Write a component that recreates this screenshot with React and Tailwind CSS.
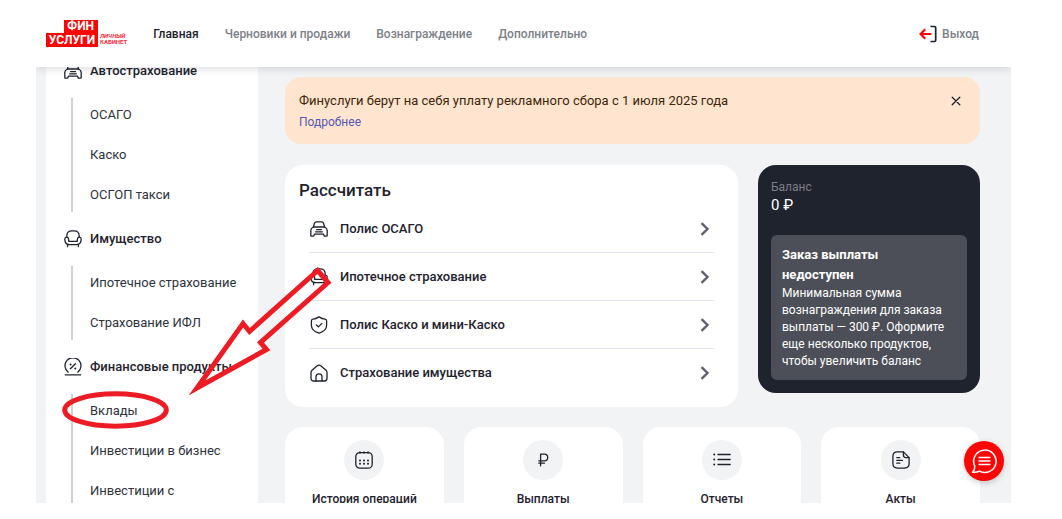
import React from "react";

const stroke = {
  fill: "none",
  stroke: "currentColor",
  strokeWidth: 1.3,
  strokeLinecap: "round",
  strokeLinejoin: "round",
};

function Icon({ children, className = "size-[18px]" }) {
  return (
    <svg viewBox="0 0 18 18" className={`${className} shrink-0`} aria-hidden="true" {...stroke}>
      {children}
    </svg>
  );
}

function CarIcon() {
  return (
    <Icon>
      <path d="M3.400 7 4.500 3.200Q4.900 1.800 6.300 1.800h5.400q1.400 0 1.800 1.400L14.600 7" />
      <path d="M3.400 7h11.200q2.600 1.200 2.600 3.600v4.800q0 .8-.8.8h-1.500q-.7 0-.9-.7l-.4-1.300H4.400L4 15.500q-.2.700-.9.700H1.600q-.8 0-.8-.8v-4.800Q.8 8.200 3.400 7Z" />
      <path d="M6.600 9.600h4.800M5.600 11.800h6.800" />
    </Icon>
  );
}

function ArmchairIcon() {
  return (
    <Icon>
      <path d="M2.800 7V6Q2.800.9 8 .9h2q5.200 0 5.200 5.100v1" />
      <path d="M2.600 7.200q1.700 0 1.900 1.700l.3 2.500h8.400l.3-2.500q.2-1.700 1.900-1.700t1.800 1.900q0 5.500-4.600 5.500H5.400Q.8 14.600.8 9.100q.1-1.900 1.800-1.900Z" />
      <path d="M3.600 14.600v2M14.400 14.600v2" />
    </Icon>
  );
}

function PercentIcon() {
  return (
    <Icon>
      <path d="M4.200 14.200A8 8 0 1 1 13.800 14.200" />
      <path d="M1.200 16.800h15.600M6.400 10.800l5-5" />
      <path d="M6.600 6.400h.01M11.200 10.400h.01" strokeWidth="2" />
    </Icon>
  );
}

function ShieldIcon() {
  return (
    <Icon>
      <path d="M9 .9q3.200 2 6 2.300 1.600.200 1.600 1.700v4.300q0 5.500-7.600 8Q1.400 14.700 1.400 9.200V4.900q0-1.500 1.600-1.700Q5.800 2.900 9 .9Z" />
      <path d="m6.400 9 2 1.900 3.500-3.500" />
    </Icon>
  );
}

function HomeIcon() {
  return (
    <Icon>
      <path d="M1 8.400q0-1.200 1-2.100L7.200 1.800q1.800-1.500 3.600 0L16 6.300q1 .9 1 2.100v5.800q0 2.800-2.800 2.800H3.800Q1 17 1 14.200Z" />
      <path d="M6 17v-4.200a3 3 0 0 1 6 0V17" />
    </Icon>
  );
}

function CalendarIcon() {
  return (
    <Icon>
      <rect x=".8" y="1.600" width="16.400" height="15.600" rx="4" />
      <path d="M5 .8v1.400M9 .8v1.400M13 .8v1.400" />
      <path d="M5 9.400h.01M9 9.400h.01M13 9.400h.01M5 12.800h.01M9 12.800h.01M13 12.800h.01" strokeWidth="2" />
    </Icon>
  );
}

function RubleIcon() {
  return (
    <Icon>
      <path d="M6.600 14.800V3.200h3.800a3.300 3.300 0 0 1 0 6.600H4.800M4.800 12.200h5.600" />
    </Icon>
  );
}

function ListIcon() {
  return (
    <Icon>
      <path d="M5 3.500h12.200M5 8.500h12.200M5 13.500h12.200" />
      <path d="M1.200 3.500h.01M1.200 8.500h.01M1.200 13.500h.01" strokeWidth="2" />
    </Icon>
  );
}

function DocumentIcon() {
  return (
    <Icon>
      <path d="M11.400.9H5.400Q.9.900.9 5.400v7.200q0 4.500 4.500 4.500h7.200q4.500 0 4.500-4.500V6.600Z" />
      <path d="M11.400.9v3.200q0 2.500 2.500 2.500h3.200M4.800 6.600h3M4.800 9.400h5.600M4.800 12.200h3" />
    </Icon>
  );
}

const menu = [
  { title: "Автострахование", icon: <CarIcon />, items: ["ОСАГО", "Каско", "ОСГОП такси"] },
  { title: "Имущество", icon: <ArmchairIcon />, items: ["Ипотечное страхование", "Страхование ИФЛ"] },
  { title: "Финансовые продукты", icon: <PercentIcon />, items: ["Вклады", "Инвестиции в бизнес", "Инвестиции с"] },
];

const products = [
  { label: "Полис ОСАГО", icon: <CarIcon /> },
  { label: "Ипотечное страхование", icon: <ArmchairIcon /> },
  { label: "Полис Каско и мини-Каско", icon: <ShieldIcon /> },
  { label: "Страхование имущества", icon: <HomeIcon /> },
];

const tiles = [
  { label: "История операций", icon: <CalendarIcon /> },
  { label: "Выплаты", icon: <RubleIcon /> },
  { label: "Отчеты", icon: <ListIcon /> },
  { label: "Акты", icon: <DocumentIcon /> },
];

function Logo() {
  return (
    <a href="#" className="flex items-end gap-[2px] font-bold">
      <span className="flex flex-col items-end text-[12px] text-white">
        <span className="flex w-[34px] justify-end bg-[#fb0505] pr-1 leading-[13px]">ФИН</span>
        <span className="flex w-[52px] justify-center bg-[#fb0505] leading-[14px]">УСЛУГИ</span>
      </span>
      <span className="pb-[2px] text-[6px] leading-[6px] text-[#fb2c3c]">
        <span className="block italic">ЛИЧНЫЙ</span>
        <span className="block">КАБИНЕТ</span>
      </span>
    </a>
  );
}

function Header() {
  return (
    <header className="relative z-10 flex h-[67px] shrink-0 items-center bg-white pr-8 pl-[10px] text-[12px] font-medium text-[#7c7f88] shadow-[0_2px_8px_rgba(30,34,45,0.15)]">
      <Logo />
      <nav className="ml-[26px] flex gap-[26px]">
        <a href="#" className="text-[#1e222d]">Главная</a>
        <a href="#">Черновики и продажи</a>
        <a href="#">Вознаграждение</a>
        <a href="#">Дополнительно</a>
      </nav>
      <button type="button" className="ml-auto flex items-center gap-[5px]">
        <svg viewBox="0 0 18 18" className="size-[18px]" fill="none" strokeWidth="1.700" aria-hidden="true">
          <path d="M11.500 1.500h4q1.200 0 1.200 1.200v12.600q0 1.200-1.200 1.200h-4" stroke="#1e222d" />
          <path d="M12.500 9H2M6.200 4.200 1.600 9l4.600 4.800" stroke="#fb0505" strokeWidth="2.200" />
        </svg>
        Выход
      </button>
    </header>
  );
}

function Sidebar() {
  return (
    <aside className="ml-[10px] w-[212px] shrink-0 bg-white pl-[18px]">
      <nav className="-mt-2 flex flex-col gap-[15px]">
        {menu.map((group) => (
          <section key={group.title} className="flex flex-col gap-[15px]">
            <h2 className="flex h-6 items-center gap-2 text-[13px] font-medium whitespace-nowrap">
              {group.icon}
              {group.title}
            </h2>
            <ul className="ml-[7px] flex flex-col gap-[6px] border-l-2 border-[#cfd0d3] pl-[17px] text-[13px] text-[#2e323c]">
              {group.items.map((item) => (
                <li key={item}>
                  <a href="#" className="block leading-[34px] whitespace-nowrap">{item}</a>
                </li>
              ))}
            </ul>
          </section>
        ))}
      </nav>
    </aside>
  );
}

function Banner() {
  return (
    <section className="flex h-[67px] items-start justify-between rounded-2xl bg-[#ffe5cf] px-[14px] pt-[14px]">
      <div>
        <p className="text-[13px] leading-5 text-[#3d2509]">
          Финуслуги берут на себя уплату рекламного сбора с 1 июля 2025 года
        </p>
        <a href="#" className="block text-[12px] leading-[22px] text-[#5558b4]">Подробнее</a>
      </div>
      <button type="button" aria-label="Закрыть" className="flex size-5 items-center justify-center">
        <svg viewBox="0 0 10 10" className="size-[10px]" {...stroke} aria-hidden="true">
          <path d="m1.200 1.200 7.600 7.600M8.800 1.200 1.200 8.800" />
        </svg>
      </button>
    </section>
  );
}

function Calculator() {
  return (
    <section className="h-[242px] flex-1 rounded-[18px] bg-white pt-[13px] pr-6 pl-[14px]">
      <h1 className="text-[17px] leading-6 font-medium">Рассчитать</h1>
      <ul className="mt-[3px] ml-[10px] divide-y divide-[#e3e6ee]">
        {products.map((product) => (
          <li key={product.label}>
            <a href="#" className="flex h-[47px] items-center gap-3 pr-1 pl-px text-[13px] font-medium">
              {product.icon}
              {product.label}
              <svg viewBox="0 0 10 14" className="ml-auto h-[14px] w-[10px]" fill="none" stroke="#5f616e" strokeWidth="2.400" aria-hidden="true">
                <path d="m1.500 1.200 6 5.800-6 5.800" />
              </svg>
            </a>
          </li>
        ))}
      </ul>
    </section>
  );
}

function Balance() {
  return (
    <section className="w-[222px] shrink-0 rounded-[18px] bg-[#1f232e] px-[13px] pt-[14px] pb-[13px] text-white">
      <p className="text-[12px] leading-4 text-[#7b7e86]">Баланс</p>
      <p className="text-[15px] leading-5">0 ₽</p>
      <div className="mt-5 rounded-md bg-[#4c4f57] px-[11px] pt-[10px] pb-[10px]">
        <h2 className="text-[13px] leading-5 font-bold">Заказ выплаты<br />недоступен</h2>
        <p className="text-[12px] leading-[17px]">
          Минимальная сумма вознаграждения для заказа выплаты — 300 ₽. Оформите еще несколько продуктов, чтобы увеличить баланс
        </p>
      </div>
    </section>
  );
}

function Tiles() {
  return (
    <ul className="grid grid-cols-4 gap-5">
      {tiles.map((tile) => (
        <li key={tile.label}>
          <a href="#" className="flex flex-col items-center gap-[10px] rounded-[18px] bg-white pt-[13px] pb-6 text-[12px] leading-[18px] font-medium">
            <span className="flex size-10 items-center justify-center rounded-full bg-[#f2f3f5]">{tile.icon}</span>
            {tile.label}
          </a>
        </li>
      ))}
    </ul>
  );
}

function ChatButton() {
  return (
    <button
      type="button"
      aria-label="Чат"
      className="absolute right-[7px] bottom-[22px] flex size-10 items-center justify-center rounded-full bg-[#fb0505] text-white shadow-[0_2px_6px_rgba(0,0,0,0.2)]"
    >
      <svg viewBox="0 0 26 26" className="size-[26px]" fill="none" stroke="currentColor" strokeWidth="1.500" strokeLinejoin="round" aria-hidden="true">
        <path d="M3.800 18.200A11.200 11.200 0 1 1 8.500 23.100Q5.500 24.800 1.600 24.200 3.900 21.600 3.800 18.200Z" />
        <path d="M7.500 9.500h12M7.500 13h12M7.500 16.500h12" />
      </svg>
    </button>
  );
}

function Annotation() {
  return (
    <svg className="pointer-events-none absolute top-0 left-0 z-20 h-[440px] w-[340px]" viewBox="0 0 340 440" fill="none" stroke="#ed1c24" strokeWidth="5" strokeMiterlimit="10" aria-hidden="true">
      <ellipse cx="115.500" cy="410" rx="50.800" ry="16.200" />
      <path d="M197 388 243 323.500 249.500 331.500 317.700 270.500 328 282.500 260.500 342.500 266.500 349.500Z" />
    </svg>
  );
}

export default function App() {
  return (
    <div className="relative flex h-screen flex-col overflow-hidden bg-white pr-[51px] pb-4 pl-9 font-[Roboto,sans-serif] text-[#1e222d]">
      <div className="relative flex min-h-0 flex-1 flex-col overflow-hidden">
        <Header />
        <div className="flex min-h-0 flex-1 overflow-hidden bg-[#f2f3f5]">
          <Sidebar />
          <main className="min-w-0 flex-1 pt-[10px] pr-[31px] pl-[27px]">
            <Banner />
            <div className="mt-[21px] mb-5 flex items-start gap-5">
              <Calculator />
              <Balance />
            </div>
            <Tiles />
          </main>
        </div>
        <ChatButton />
      </div>
      <Annotation />
    </div>
  );
}
